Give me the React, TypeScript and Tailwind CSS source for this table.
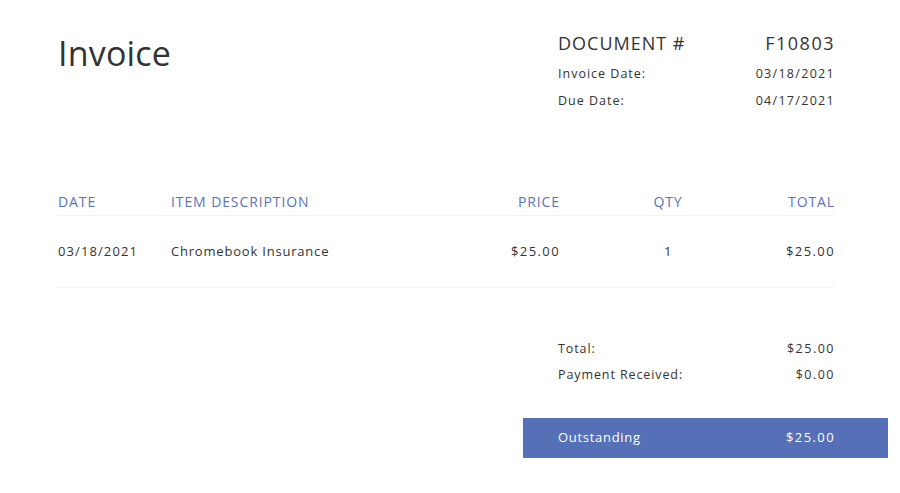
const items = [
  { date: '03/18/2021', description: 'Chromebook Insurance', price: '$25.00', qty: 1, total: '$25.00' },
];

const App = () => {
  return (
    <div
      className="w-[900px] h-[493px] bg-white text-[#333] pl-[58px] pr-[65px] pt-[30px]"
      style={{ fontFamily: '"Open Sans", Arial, sans-serif' }}
    >
      {/* Header */}
      <header className="flex justify-between">
        <h1 className="text-[34px] leading-[40px] mt-[3px] tracking-[0.2px]">Invoice</h1>
        <div className="w-[277px] text-[12.5px] tracking-[1px]">
          <div className="flex justify-between items-center h-[26px] text-[18px] tracking-[1px]">
            <span>DOCUMENT #</span>
            <span className="tracking-[1.5px]">F10803</span>
          </div>
          <div className="flex justify-between items-center h-[36px]">
            <span>Invoice Date:</span>
            <span className="tracking-[1.3px]">03/18/2021</span>
          </div>
          <div className="flex justify-between items-center h-[18px]">
            <span>Due Date:</span>
            <span className="tracking-[1.3px]">04/17/2021</span>
          </div>
        </div>
      </header>

      {/* Items */}
      <div className="mt-[77px]">
        <div className="flex items-center h-[29px] border-b border-[#f3f3f3] text-[14px] text-[#5a73b8] tracking-[0.9px]">
          <div className="w-[113px]">DATE</div>
          <div className="flex-1">ITEM DESCRIPTION</div>
          <div className="w-[80px] text-right">PRICE</div>
          <div className="w-[216px] text-center">QTY</div>
          <div className="w-[59px] text-right">TOTAL</div>
        </div>
        {items.map((item) => (
          <div
            key={item.description}
            className="flex items-center h-[72px] border-b border-[#f3f3f3] text-[13px] tracking-[0.8px]"
          >
            <div className="w-[113px] tracking-[1.1px]">{item.date}</div>
            <div className="flex-1">{item.description}</div>
            <div className="w-[80px] text-right tracking-[1.4px]">{item.price}</div>
            <div className="w-[216px] text-center">{item.qty}</div>
            <div className="w-[59px] text-right tracking-[1.4px]">{item.total}</div>
          </div>
        ))}
      </div>

      {/* Totals */}
      <div className="ml-auto w-[277px] mt-[48px] text-[12.5px] tracking-[0.9px]">
        <div className="flex justify-between items-center h-[26px]">
          <span>Total:</span>
          <span className="tracking-[1.5px]">$25.00</span>
        </div>
        <div className="flex justify-between items-center h-[26px]">
          <span>Payment Received:</span>
          <span className="tracking-[1.5px]">$0.00</span>
        </div>
        <div className="flex justify-between items-center h-[40px] mt-[30px] ml-[-35px] mr-[-53px] pl-[35px] pr-[53px] bg-[#5570b6] text-white text-[13px] tracking-[0.7px]">
          <span>Outstanding</span>
          <span className="tracking-[1.4px]">$25.00</span>
        </div>
      </div>
    </div>
  );
};

export default App;
